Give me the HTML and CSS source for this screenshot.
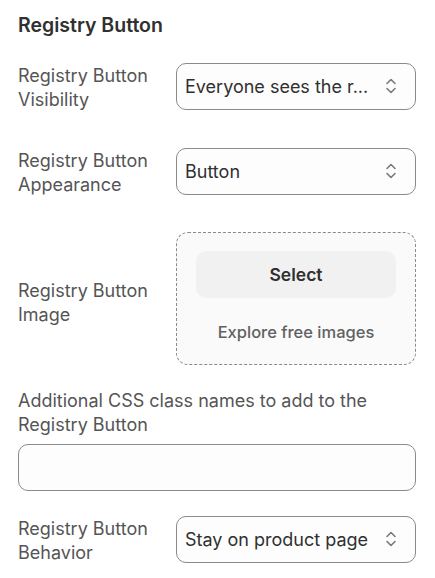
FILE: index.html
```html
<!DOCTYPE html>
<html>
<head>
<meta charset="utf-8">
<link rel="stylesheet" href="styles.css">
</head>
<body>
<div class="panel">
  <h2 class="title">Registry Button</h2>

  <div class="row first">
    <label class="label">Registry Button Visibility</label>
    <div class="select"><span class="value">Everyone sees the r...</span>
      <svg class="chev" width="12" height="18" viewBox="0 0 12 18"><path d="M2 6.5 L6 2.5 L10 6.5 M2 11.5 L6 15.5 L10 11.5" fill="none" stroke="#7a7a7a" stroke-width="1.6" stroke-linecap="round" stroke-linejoin="round"/></svg>
    </div>
  </div>

  <div class="row">
    <label class="label">Registry Button Appearance</label>
    <div class="select"><span class="value">Button</span>
      <svg class="chev" width="12" height="18" viewBox="0 0 12 18"><path d="M2 6.5 L6 2.5 L10 6.5 M2 11.5 L6 15.5 L10 11.5" fill="none" stroke="#7a7a7a" stroke-width="1.6" stroke-linecap="round" stroke-linejoin="round"/></svg>
    </div>
  </div>

  <div class="row img">
    <label class="label">Registry Button Image</label>
    <div class="drop">
      <div class="btn">Select</div>
      <div class="explore">Explore free images</div>
    </div>
  </div>

  <div class="stack">
    <label class="label">Additional CSS class names to add to the Registry Button</label>
    <div class="input"></div>
  </div>

  <div class="row last">
    <label class="label">Registry Button Behavior</label>
    <div class="select"><span class="value">Stay on product page</span>
      <svg class="chev" width="12" height="18" viewBox="0 0 12 18"><path d="M2 6.5 L6 2.5 L10 6.5 M2 11.5 L6 15.5 L10 11.5" fill="none" stroke="#7a7a7a" stroke-width="1.6" stroke-linecap="round" stroke-linejoin="round"/></svg>
    </div>
  </div>
</div>
</body>
</html>
```

FILE: styles.css
```css
* { box-sizing: border-box; }
html, body { margin: 0; padding: 0; background: #fff; }
body { font-family: Inter, "Noto Sans", sans-serif; color: #303030; }
.panel { padding: 12px 19px 0 18px; display: flex; flex-direction: column; }
.title { margin: 0; font-size: 19.5px; font-weight: 600; line-height: 26px; color: #303030; }
.row { display: grid; grid-template-columns: 150px 240px; column-gap: 8px; align-items: center; margin-top: 37px; }
.row.first { margin-top: 24px; }
.row.last { margin-top: 24px; }
.label { font-size: 18px; line-height: 24px; color: #555; }
.row .label { margin-top: 2px; margin-bottom: -2px; }
.row.img .label { margin-top: 4px; margin-bottom: -4px; }
.select { height: 47px; border: 1px solid #8a8a8a; border-radius: 10px; background: #fdfdfd; display: flex; align-items: center; justify-content: space-between; padding: 0 18px 0 8px; }
.value { font-size: 18px; color: #303030; white-space: nowrap; }
.chev { display: block; }
.drop { height: 133px; border: 1px dashed #8a8a8a; border-radius: 12px; background: #fafafa; display: flex; flex-direction: column; align-items: center; padding: 18px 19px 0; }
.btn { width: 100%; height: 47px; border-radius: 10px; background: #f1f1f1; display: flex; align-items: center; justify-content: center; font-size: 17.5px; font-weight: 600; color: #303030; }
.explore { margin-top: 24px; font-size: 16.5px; font-weight: 500; color: #616161; }
.stack { display: flex; flex-direction: column; gap: 7px; margin-top: 24px; }
.input { height: 47px; border: 1px solid #8a8a8a; border-radius: 10px; background: #fdfdfd; }
```
